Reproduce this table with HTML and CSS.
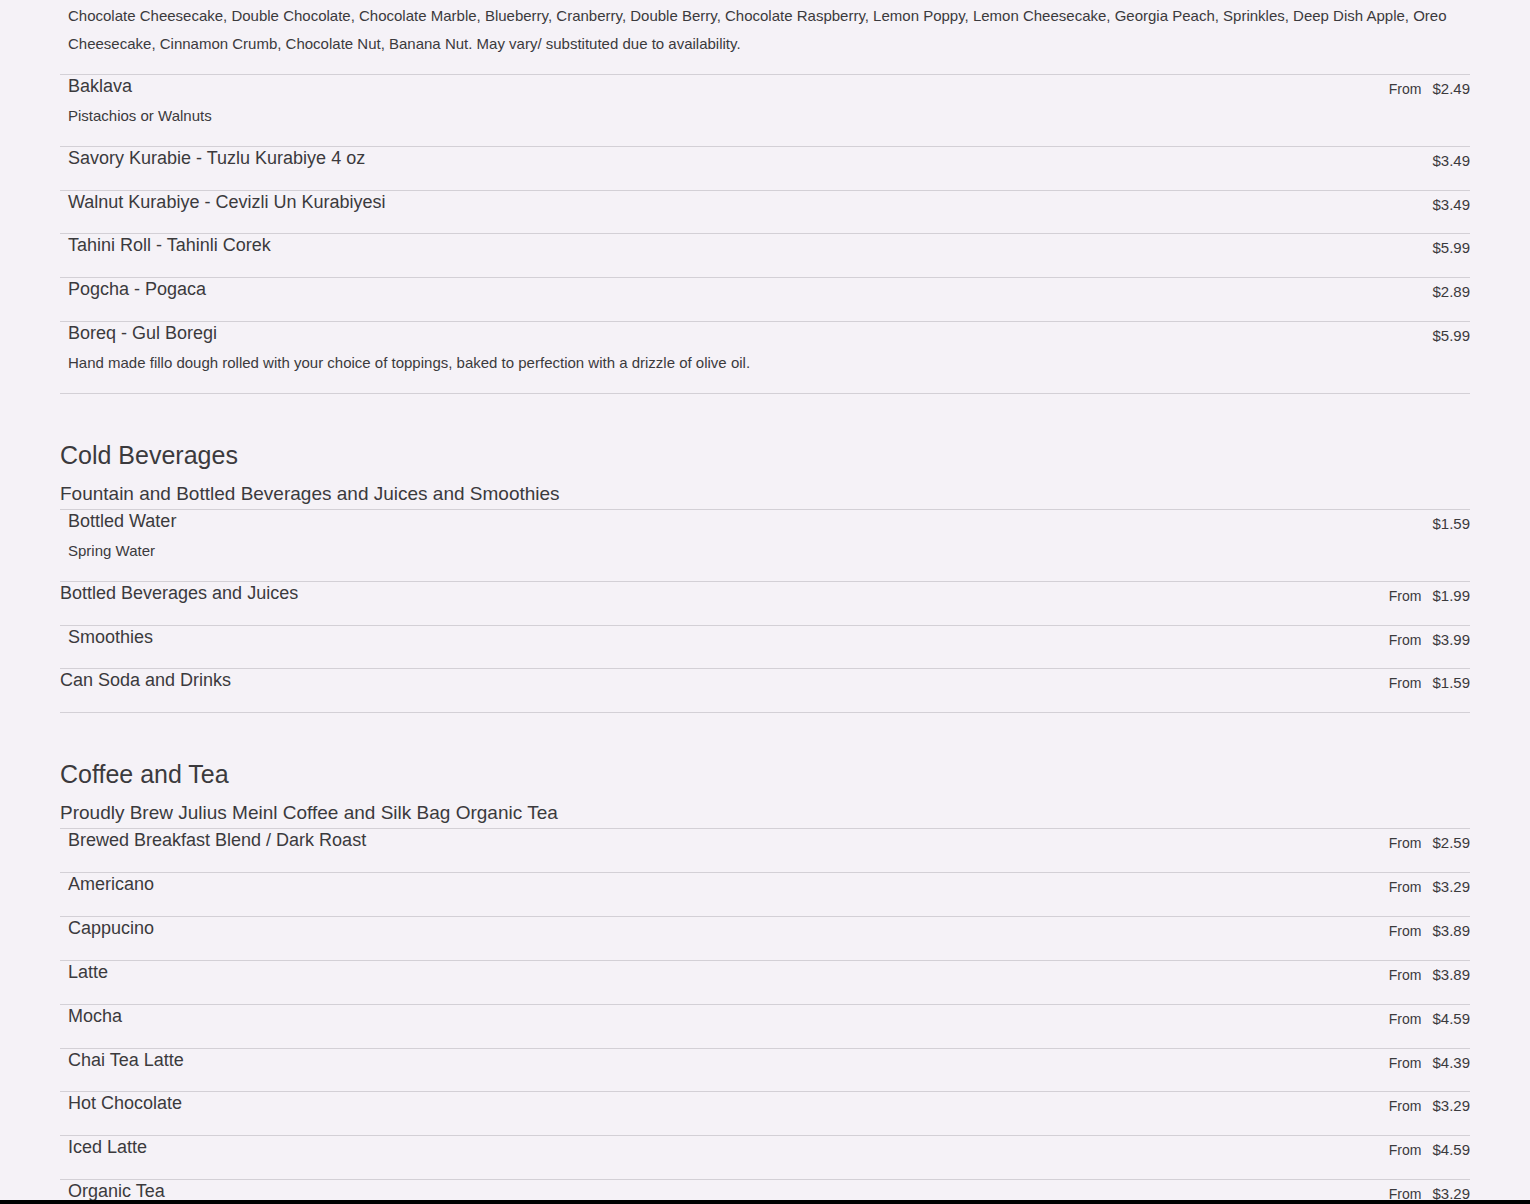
FILE: index.html
```html
<!DOCTYPE html>
<html lang="en">
<head>
    <meta charset="UTF-8">
    <meta name="viewport" content="width=device-width, initial-scale=1.0">
    <title>Menu</title>
    <link rel="stylesheet" href="styles.css">
</head>
<body>
    <div class="menu">
        <!-- tail of the bakery section -->
        <div class="section">
            <div class="item item-cut">
                <p class="desc">Chocolate Cheesecake, Double Chocolate, Chocolate Marble, Blueberry, Cranberry, Double Berry, Chocolate Raspberry, Lemon Poppy, Lemon Cheesecake, Georgia Peach, Sprinkles, Deep Dish Apple, Oreo Cheesecake, Cinnamon Crumb, Chocolate Nut, Banana Nut. May vary/ substituted due to availability.</p>
            </div>
            <div class="item">
                <div class="item-top">
                    <span class="name">Baklava</span>
                    <span class="price"><span class="from">From</span>$2.49</span>
                </div>
                <p class="desc">Pistachios or Walnuts</p>
            </div>
            <div class="item">
                <div class="item-top">
                    <span class="name">Savory Kurabie - Tuzlu Kurabiye 4 oz</span>
                    <span class="price">$3.49</span>
                </div>
            </div>
            <div class="item">
                <div class="item-top">
                    <span class="name">Walnut Kurabiye - Cevizli Un Kurabiyesi</span>
                    <span class="price">$3.49</span>
                </div>
            </div>
            <div class="item">
                <div class="item-top">
                    <span class="name">Tahini Roll - Tahinli Corek</span>
                    <span class="price">$5.99</span>
                </div>
            </div>
            <div class="item">
                <div class="item-top">
                    <span class="name">Pogcha - Pogaca</span>
                    <span class="price">$2.89</span>
                </div>
            </div>
            <div class="item">
                <div class="item-top">
                    <span class="name">Boreq - Gul Boregi</span>
                    <span class="price">$5.99</span>
                </div>
                <p class="desc">Hand made fillo dough rolled with your choice of toppings, baked to perfection with a drizzle of olive oil.</p>
            </div>
        </div>

        <div class="section">
            <h2>Cold Beverages</h2>
            <h3>Fountain and Bottled Beverages and Juices and Smoothies</h3>
            <div class="item">
                <div class="item-top">
                    <span class="name">Bottled Water</span>
                    <span class="price">$1.59</span>
                </div>
                <p class="desc">Spring Water</p>
            </div>
            <div class="item group">
                <div class="item-top">
                    <span class="name">Bottled Beverages and Juices</span>
                    <span class="price"><span class="from">From</span>$1.99</span>
                </div>
            </div>
            <div class="item">
                <div class="item-top">
                    <span class="name">Smoothies</span>
                    <span class="price"><span class="from">From</span>$3.99</span>
                </div>
            </div>
            <div class="item group">
                <div class="item-top">
                    <span class="name">Can Soda and Drinks</span>
                    <span class="price"><span class="from">From</span>$1.59</span>
                </div>
            </div>
        </div>

        <div class="section">
            <h2>Coffee and Tea</h2>
            <h3>Proudly Brew Julius Meinl Coffee and Silk Bag Organic Tea</h3>
            <div class="item">
                <div class="item-top">
                    <span class="name">Brewed Breakfast Blend / Dark Roast</span>
                    <span class="price"><span class="from">From</span>$2.59</span>
                </div>
            </div>
            <div class="item">
                <div class="item-top">
                    <span class="name">Americano</span>
                    <span class="price"><span class="from">From</span>$3.29</span>
                </div>
            </div>
            <div class="item">
                <div class="item-top">
                    <span class="name">Cappucino</span>
                    <span class="price"><span class="from">From</span>$3.89</span>
                </div>
            </div>
            <div class="item">
                <div class="item-top">
                    <span class="name">Latte</span>
                    <span class="price"><span class="from">From</span>$3.89</span>
                </div>
            </div>
            <div class="item">
                <div class="item-top">
                    <span class="name">Mocha</span>
                    <span class="price"><span class="from">From</span>$4.59</span>
                </div>
            </div>
            <div class="item">
                <div class="item-top">
                    <span class="name">Chai Tea Latte</span>
                    <span class="price"><span class="from">From</span>$4.39</span>
                </div>
            </div>
            <div class="item">
                <div class="item-top">
                    <span class="name">Hot Chocolate</span>
                    <span class="price"><span class="from">From</span>$3.29</span>
                </div>
            </div>
            <div class="item">
                <div class="item-top">
                    <span class="name">Iced Latte</span>
                    <span class="price"><span class="from">From</span>$4.59</span>
                </div>
            </div>
            <div class="item">
                <div class="item-top">
                    <span class="name">Organic Tea</span>
                    <span class="price"><span class="from">From</span>$3.29</span>
                </div>
            </div>
        </div>
    </div>
    <div class="bottom-bar"></div>
</body>
</html>
```

FILE: styles.css
```css
body {
    font-family: "Liberation Sans", Arial, sans-serif;
    background-color: #f5f2f7;
    color: #3b3a3d;
    margin: 0;
    padding: 0;
}
.menu {
    margin: 0 60px;
    padding-top: 2px;
}
.section {
    border-bottom: 1px solid #d3d0d6;
}
.section + .section {
    padding-top: 46px;
}
h2 {
    font-size: 25px;
    font-weight: normal;
    line-height: 30px;
    margin: 0 0 12px;
}
h3 {
    font-size: 19px;
    font-weight: normal;
    line-height: 23px;
    margin: 0 0 4px;
}
.item {
    border-top: 1px solid #d3d0d6;
    padding-bottom: 15.85px;
}
.item-cut {
    border-top: none;
}
.item-top {
    display: flex;
    justify-content: space-between;
    align-items: flex-start;
    height: 22px;
    margin-bottom: 5px;
}
.name {
    font-size: 18px;
    line-height: 22px;
    padding-left: 8px;
}
.group .name {
    padding-left: 0;
}
.price {
    font-size: 15px;
    line-height: 17px;
    margin-top: 5px;
    white-space: nowrap;
}
.from {
    font-size: 14px;
    line-height: 1;
    margin-right: 11px;
}
.desc {
    font-size: 15px;
    line-height: 28px;
    margin: 0;
    padding-left: 8px;
}
.bottom-bar {
    position: fixed;
    left: 0;
    right: 0;
    bottom: 0;
    height: 4px;
    background-color: #000;
}
```
